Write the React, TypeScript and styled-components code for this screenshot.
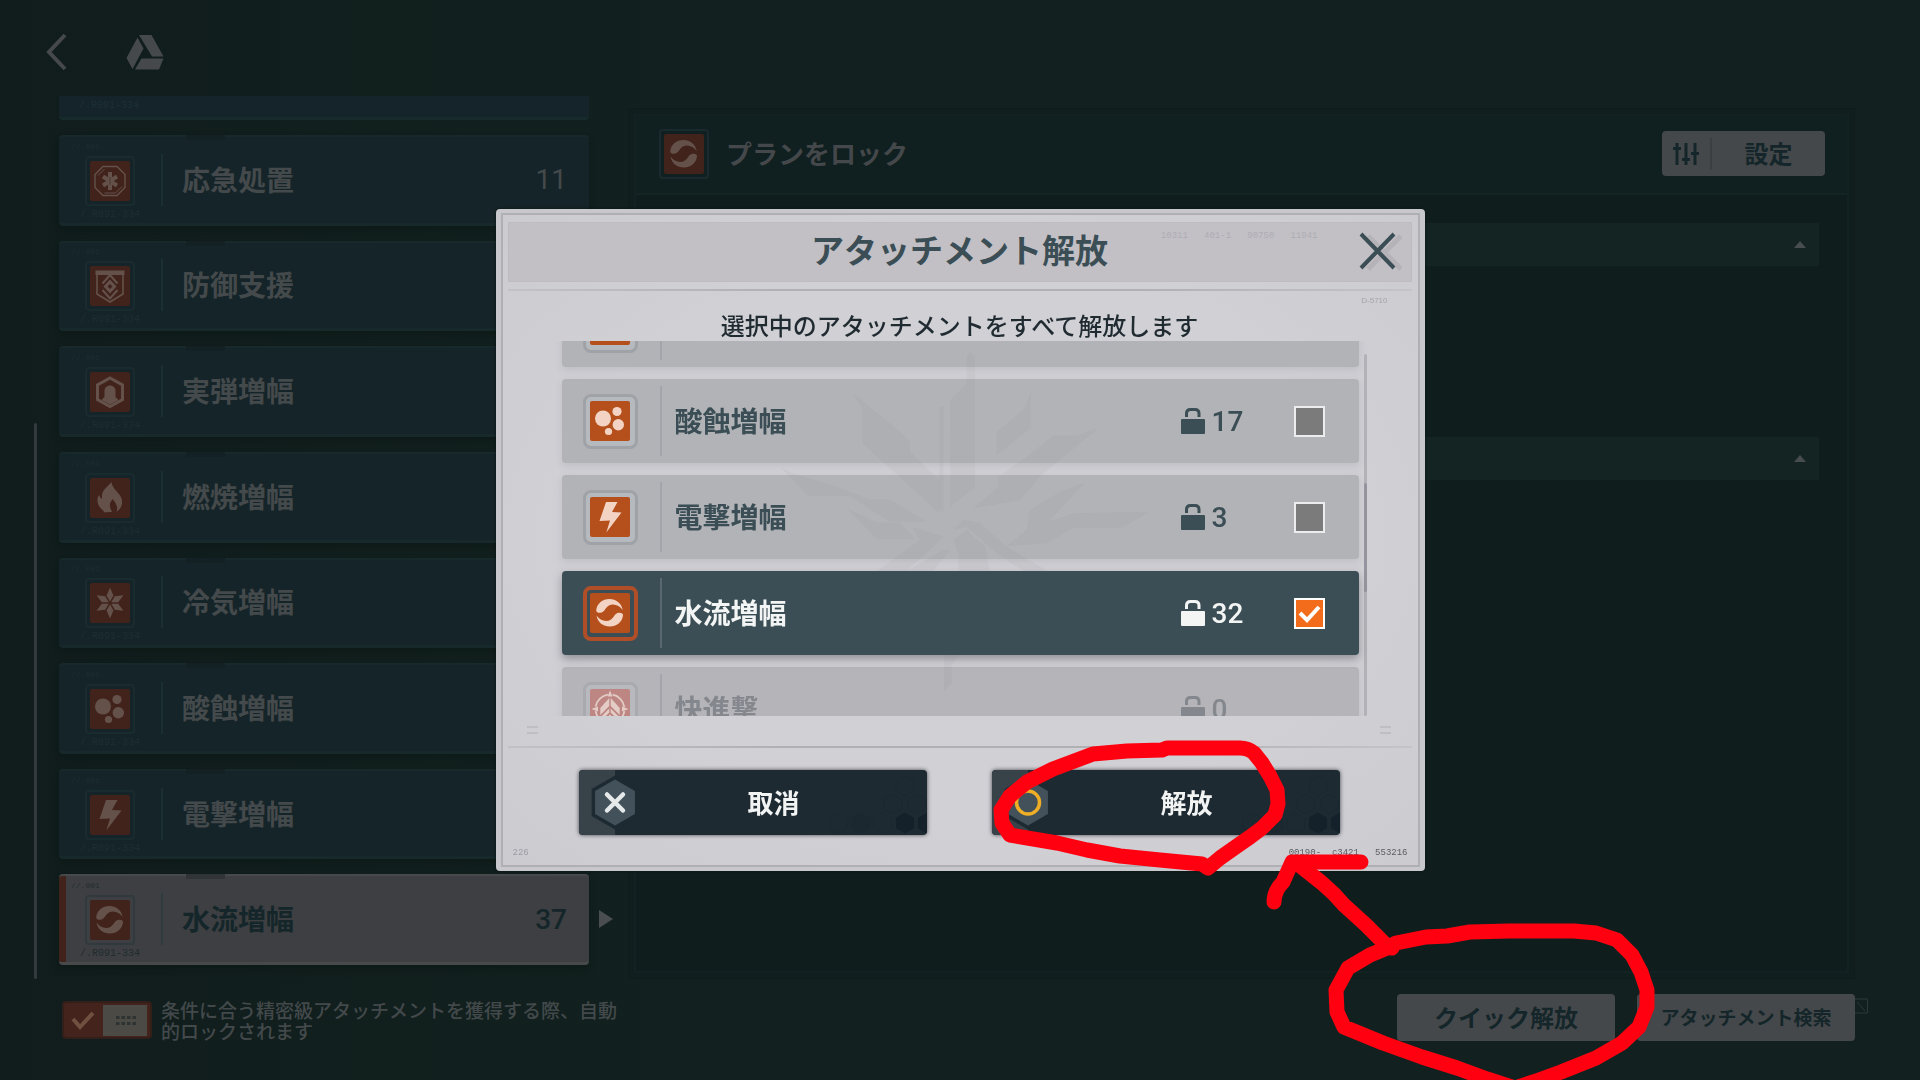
import React, { useState } from "react";
import styled, { createGlobalStyle, css } from "styled-components";

const GlobalStyle = createGlobalStyle`
  *, *::before, *::after { box-sizing: border-box; }
  body {
    margin: 0;
    background: #12201f;
    font-family: Roboto, "Noto Sans CJK JP", sans-serif;
  }
  button, input { font-family: inherit; }
  ul { list-style: none; margin: 0; padding: 0; }
  h1, h2, p { margin: 0; }
  svg { display: block; }
`;

/* ---------- icons ---------- */

type IconName =
  | "aid" | "guard" | "round" | "flame" | "frost"
  | "acid" | "bolt" | "water" | "rush";

const swirl =
  "M6.2 17C7 10.5 12.500 6 19.500 6C26 6 31.500 10 32.700 17C29.500 12.500 23.500 9.800 18.500 12.800C15 15 14.800 19.500 10.200 19.800C7.600 19.900 6 19 6.200 17Z";

const glyphs: Record<IconName, React.ReactNode> = {
  aid: (
    <>
      <path d="M13 5.5h14l8 8v13l-8 8H13l-8-8v-13z" fill="none" stroke="currentColor" strokeWidth="1.4" />
      <path d="M14.500 32h11l6.500-6.500M8 14.500L14.500 8" fill="none" stroke="currentColor" strokeWidth="1" />
      <path d="M20 11v18M13 15.500l14 9M27 15.500l-14 9" stroke="currentColor" strokeWidth="4" />
      <path d="M20 16v8" stroke="#0003" strokeWidth="1.5" />
    </>
  ),
  guard: (
    <>
      <path d="M5.500 4.500h29V9h-29z" />
      <path d="M7 8v20l13 8 13-8V8" fill="none" stroke="currentColor" strokeWidth="1.6" />
      <path d="M12.500 17.500l7.500-8.500 7.500 8.500M12.500 24l7.500 8.500 7.500-8.500" fill="none" stroke="currentColor" strokeWidth="2" />
      <path fillRule="evenodd" d="M20 13.500l6.500 7-6.500 7-6.500-7zM20 18l-2.500 2.500L20 23l2.500-2.500z" />
    </>
  ),
  round: (
    <>
      <path d="M20 6l12.500 7v14.500L20 34.500 7.500 27.500V13z" fill="none" stroke="currentColor" strokeWidth="3" />
      <path d="M11.500 28l3-3v-6c0-3.200 2.500-5.500 5.500-5.500s5.500 2.300 5.500 5.500v6l3 3-8.500 4.500z" />
    </>
  ),
  flame: (
    <path d="M21.500 4c.5 5 4.500 8.500 7.500 12 4.500 5.500 4.500 13-2.500 18 1.500-4.500.5-8-4-13-.8 2-2.500 3-2.600 5.500-.1 3 1 5 2.100 7.500H15C8 29.500 5.500 22.500 9 17c.8 2 1.500 3.300 3.200 4C10.500 13 16 10.500 21.500 4zM14 34.200c-1.500-3-.8-6 1-8.200.2 3.500 1.500 5.500 3.500 8.200z" />
  ),
  frost: (
    <>
      {[0, 60, 120, 180, 240, 300].map((a) => (
        <path key={a} d="M20 18.500l-3.400-6L20 4.500l3.400 8z" transform={`rotate(${a} 20 20)`} />
      ))}
    </>
  ),
  acid: (
    <>
      <circle cx="13" cy="17.500" r="8" />
      <circle cx="27" cy="10.500" r="4.600" />
      <circle cx="28.300" cy="23.700" r="5.700" />
      <circle cx="18.500" cy="30.500" r="3.600" />
    </>
  ),
  bolt: <path d="M16 5h11.500L22 15l9.500.5L16.300 35.500 20 23.500 9.500 24z" />,
  water: (
    <>
      <path d={swirl} />
      <path d={swirl} transform="rotate(180 19.600 19.800)" />
    </>
  ),
  rush: (
    <>
      <circle cx="20" cy="20" r="14.500" fill="none" stroke="currentColor" strokeWidth="1.800" strokeDasharray="18 4.770" strokeDashoffset="20.500" />
      <path d="M20 1.500l2.500 6h-5zM38.500 20l-6.500 2.500v-5zM1.500 20l6.500-2.500v5zM20 38.500l-2.500-6h5z" />
      <path d="M19.300 9v8l-9 9v-7zM20.700 9v8l9 9v-7zM19.300 19.500v4l-7 7-1.500-2.500zM20.700 19.500v4l7 7 1.500-2.500zM20 25.500l5 5-2 2-3-3-3 3-2-2z" />
    </>
  ),
};

const Tile = styled.span<{ $dim?: boolean; $on?: boolean; $off?: boolean }>`
  display: grid;
  place-items: center;
  width: ${(p) => (p.$dim ? 50 : 55)}px;
  height: ${(p) => (p.$dim ? 50 : 55)}px;
  border-radius: ${(p) => (p.$dim ? 4 : 8)}px;
  border: ${(p) => (p.$dim ? "2px solid #192b2e" : "3px solid #9fa2a6")};
  background: ${(p) => (p.$dim ? "transparent" : "#b6b9bd")};
  ${(p) => p.$on && !p.$dim && css`border: 4px solid #b04f27; background: transparent;`}
  ${(p) => p.$on && p.$dim && css`border-color: #30393d;`}
  ${(p) => p.$off && css`border-color: #a8aaaf; background: #b8b9bf;`}

  svg {
    width: 40px;
    height: 40px;
    border-radius: 2px;
    background: ${(p) => (p.$dim ? "#41231c" : p.$off ? "#bd8682" : "#b5501c")};
    color: ${(p) => (p.$dim ? "#64524a" : p.$off ? "#e3cbc6" : "#f3d3c4")};
  }
`;

function ItemIcon({ name, dim, on, off }: { name: IconName; dim?: boolean; on?: boolean; off?: boolean }) {
  return (
    <Tile $dim={dim} $on={on} $off={off}>
      <svg viewBox="0 0 40 40" fill="currentColor" aria-hidden="true">{glyphs[name]}</svg>
    </Tile>
  );
}

/* ---------- page behind the dialog ---------- */

const Page = styled.div`
  position: relative;
  min-height: 100vh;
  display: grid;
  grid-template-rows: 96px 1fr 101px;
  background: linear-gradient(90deg, #101d1c, #12211f 40%, #12201f);
  overflow: hidden;
`;

const TopBar = styled.header`
  display: flex;
  align-items: center;
  gap: 50px;
  padding: 8px 40px 0;
`;

const IconButton = styled.button`
  border: 0;
  padding: 0;
  background: none;
  color: #46494c;
  cursor: pointer;
`;

const Main = styled.main`
  display: grid;
  grid-template-columns: 3px minmax(0, 530px) minmax(0, 1fr);
  column-gap: 22px;
  padding: 0 65px 0 34px;
  min-height: 0;
`;

const Rail = styled.div`
  align-self: end;
  height: 63%;
  border-radius: 2px;
  background: #33393c;
`;

const PlanList = styled.ul`
  display: grid;
  grid-template-rows: 24px repeat(8, 1fr);
  row-gap: 15px;
  margin-bottom: 14px;
`;

const PlanItem = styled.li<{ $on?: boolean }>`
  position: relative;
  display: grid;
  grid-template-columns: 102px 1fr auto;
  align-items: center;
  padding-right: 22px;
  border-radius: 4px;
  border: 0 solid #17292b;
  border-width: 2px 0 3px;
  background: #152428;
  color: #44494b;
  font-size: 28px;
  font-weight: 700;
  box-shadow: 0 4px 6px #0a151480;
  ${(p) =>
    p.$on &&
    css`
      background: linear-gradient(90deg, #41231c 7px, #3d3f42 7px);
      border-color: #47494b;
      color: #142629;
    `}
`;

const PlanSliver = styled.li`
  display: flex;
  align-items: flex-end;
  padding: 0 20px 6px;
  border-radius: 0 0 4px 4px;
  border-bottom: 3px solid #172b2c;
  background: #15242a;
  color: #1c2f34;
  font: 10px/10px "Liberation Mono", monospace;
`;

const PlanBadge = styled.div<{ $on?: boolean }>`
  display: grid;
  justify-items: center;
  align-content: space-between;
  height: 84px;
  padding: 4px 0 2px;
  color: ${(p) => (p.$on ? "#222c2e" : "#1c2e33")};
  font: 10px/10px "Liberation Mono", monospace;
  span:first-child { justify-self: start; padding-left: 12px; font-size: 8px; }
`;

const PlanName = styled.span<{ $on?: boolean }>`
  display: flex;
  align-items: center;
  height: 52px;
  padding: 0 0 2px 19px;
  border-left: 2px solid ${(p) => (p.$on ? "#2e3c40" : "#1b2e32")};
`;

const Count = styled.span<{ $on?: boolean }>`
  font-size: 28px;
  font-weight: ${(p) => (p.$on ? 500 : 400)};
`;

const Notch = styled.span<{ $on?: boolean }>`
  position: absolute;
  top: -2px;
  left: 24%;
  width: 39px;
  height: 5px;
  background: ${(p) => (p.$on ? "#303437" : "#132124")};
`;

const Pointer = styled.span`
  position: absolute;
  top: 50%;
  right: -24px;
  margin-top: -9px;
  border-left: 14px solid #4a4e50;
  border-top: 9px solid transparent;
  border-bottom: 9px solid transparent;
`;

const Panel = styled.section`
  margin: 12px 0 0 17px;
  padding: 5px;
  border: 1px solid #0f1c1b;
  background: #101e1d;
  min-height: 0;
`;

const PanelInner = styled.div`
  height: 100%;
  border: 2px solid #122222;
  background: #0f1e1d;
`;

const PanelHead = styled.div`
  display: flex;
  align-items: center;
  gap: 17px;
  height: 79px;
  padding: 0 22px 2px 23px;
  background: #101f1f;
  border-bottom: 2px solid #142423;
  color: #44484b;
  font-size: 26px;
  font-weight: 700;
  h1 { flex: 1; padding-bottom: 2px; font-size: inherit; }
`;

const DimButton = styled.button<{ $size: number }>`
  display: flex;
  align-items: center;
  justify-content: center;
  border: 0;
  border-radius: 4px;
  background: #45484b;
  color: #142629;
  font-size: ${(p) => p.$size}px;
  font-weight: 700;
  cursor: pointer;
`;

const SettingsButton = styled(DimButton)`
  width: 163px;
  height: 45px;
  padding: 0;
  span:first-child { padding: 4px 11px; border-right: 2px solid #3b3f42; }
  span:last-child { flex: 1; padding-bottom: 3px; }
`;

const Section = styled.button`
  display: flex;
  align-items: center;
  justify-content: flex-end;
  width: calc(100% - 56px);
  height: 43px;
  margin: 28px 28px 171px;
  padding: 0 13px;
  border: 0;
  background: #142423;
  &::after {
    content: "";
    border-bottom: 7px solid #474c4e;
    border-left: 6px solid transparent;
    border-right: 6px solid transparent;
  }
  & + & { margin-top: 0; }
`;

const Footer = styled.footer`
  display: flex;
  align-items: flex-start;
  padding: 15px 52px 0 62px;
`;

const AutoLock = styled.label`
  display: flex;
  align-items: flex-start;
  gap: 9px;
  margin-top: 7px;
  color: #43494b;
  font-size: 19px;
  line-height: 21px;
  font-weight: 500;
  span { width: 462px; }
`;

const Toggle = styled.input`
  appearance: none;
  flex: none;
  width: 90px;
  height: 38px;
  margin: 0;
  border: 2px solid #331f1a;
  border-radius: 4px;
  background:
    linear-gradient(#4b4a45, #4b4a45) right 3px center / 44px 31px no-repeat,
    #43231b;
`;

const ToggleWrap = styled.div`
  display: grid;
  svg, input { grid-area: 1 / 1; }
  svg { z-index: 1; pointer-events: none; }
`;

const Actions = styled.div`
  display: flex;
  align-items: flex-start;
  gap: 22px;
  margin-left: auto;
`;

const ActionButton = styled(DimButton)`
  width: 218px;
  height: 47px;
  padding: 0 0 2px;
`;

const CornerMark = styled.svg`
  width: 13px;
  height: 16px;
  margin: 4px 0 0 -22px;
`;

/* ---------- dialog ---------- */

const Overlay = styled.div`
  position: fixed;
  inset: 0;
  display: grid;
  place-items: center;
`;

const Dialog = styled.section`
  width: min(929px, 94vw);
  padding: 4px 5px;
  border-radius: 4px;
  background: #c8c7cc;
  box-shadow: 0 0 3px #0a1413;
`;

const DialogInner = styled.div`
  padding: 7px 6px 30px 5px;
  border: 2px solid #b0afb4;
  background: radial-gradient(ellipse at 50% 50%, #d1d0d5 60%, #cccbd0 100%);
`;

const DialogHead = styled.header`
  position: relative;
  display: grid;
  grid-template-columns: 1fr auto 1fr;
  align-items: center;
  height: 60px;
  padding: 0 9px;
  background: #c2c0c5;
  border: 1px solid #bebcc1;
  color: #3b4e55;
  h2 { grid-column: 2; font-size: 33px; line-height: 40px; font-weight: 700; }
  button { justify-self: end; color: #3b4e55; }
`;

const Serial = styled.span`
  position: absolute;
  top: 8px;
  right: 93px;
  color: #aeadb3;
  font: 9px/10px "Liberation Mono", monospace;
  white-space: pre;
`;

const Rule = styled.div`
  height: 2px;
  margin-top: 7px;
  background: linear-gradient(90deg, #c2c1c6, #b1b0b4 30%, #b1b0b4 70%, #c4c3c8);
`;

const Code = styled.p`
  height: 21px;
  padding: 5px 24px 0 0;
  text-align: right;
  color: #a5a4aa;
  font: 8px/10px "Liberation Sans", sans-serif;
`;

const Lead = styled.p`
  margin-bottom: -1px;
  text-align: center;
  color: #1f2b31;
  font-size: 24px;
  font-weight: 500;
  line-height: 30px;
`;

const Scroller = styled.div`
  position: relative;
  display: grid;
  grid-template-columns: minmax(0, 1fr) 3px;
  column-gap: 5px;
  height: 375px;
  padding: 0 45px 0 54px;
  clip-path: inset(0);
`;

const Options = styled.ul`
  display: grid;
  grid-auto-rows: 84px;
  row-gap: 12px;
  height: 375px;
  margin-top: -58px;
`;

const Option = styled.li<{ $on?: boolean; $off?: boolean }>`
  position: relative;
  border-radius: 4px;
  background: #b2b3b7;
  color: #3b4e55;
  box-shadow: 0 3px 7px #8d8c9440;
  ${(p) =>
    p.$on &&
    css`
      z-index: 2;
      background: #3b4e55;
      color: #f3f4f4;
      box-shadow: 0 4px 9px #6a6a72a0;
    `}
  ${(p) => p.$off && css`background: #b5b5b9; color: #84878d;`}
`;

const OptionLabel = styled.label`
  display: grid;
  grid-template-columns: 98px 1fr 106px 31px;
  align-items: center;
  height: 84px;
  padding-right: 34px;
  font-size: 28px;
  font-weight: 700;
  cursor: pointer;
`;

const OptionIcon = styled.span`
  padding-left: 21px;
`;

const OptionName = styled.span<{ $on?: boolean }>`
  display: flex;
  align-items: center;
  height: 70px;
  padding: 0 0 2px 13px;
  border-left: 2px solid ${(p) => (p.$on ? "#5a696f" : "#a4a5aa")};
`;

const LockCount = styled.span`
  display: flex;
  align-items: center;
  gap: 6px;
  width: 114px;
  margin-left: -8px;
  font-size: 28px;
  font-weight: 500;
`;

const Tick = styled.input`
  appearance: none;
  width: 31px;
  height: 31px;
  margin: 0;
  border: 2px solid #ececee;
  background: #7b7b7b;
  &:checked {
    border-color: #fff;
    background: #f26c1c;
  }
`;

const TickBox = styled.span<{ $off?: boolean }>`
  display: grid;
  visibility: ${(p) => (p.$off ? "hidden" : "visible")};
  input, svg { grid-area: 1 / 1; }
  svg { pointer-events: none; }
`;

const Track = styled.div`
  margin-top: 13px;
  padding-top: 129px;
  border-radius: 2px;
  background: #b3b2b7;
  &::before {
    content: "";
    display: block;
    height: 109px;
    border-radius: 2px;
    background: #96949e;
  }
`;

const Emblem = styled.svg`
  position: absolute;
  z-index: 1;
  left: 50%;
  top: -1px;
  width: 440px;
  height: 370px;
  margin-left: -220px;
  pointer-events: none;
`;

const Marks = styled.div`
  display: flex;
  align-items: center;
  justify-content: space-between;
  height: 23px;
  padding: 4px 21px 0 19px;
  span {
    width: 11px;
    height: 8px;
    border: solid #bfbec3;
    border-width: 2px 0;
  }
`;

const Buttons = styled.div`
  position: relative;
  display: grid;
  grid-template-columns: repeat(2, minmax(0, 348px));
  justify-content: center;
  gap: 65px;
  margin-top: 22px;
`;

const BigButton = styled.button`
  position: relative;
  display: grid;
  grid-template-columns: 72px 1fr;
  align-items: center;
  height: 65px;
  padding: 0 31px 0 0;
  border: 0;
  border-radius: 4px;
  overflow: hidden;
  background: #1d2a32;
  box-shadow: 0 0 4px #44464d;
  color: #f2f3f3;
  font-size: 26px;
  font-weight: 700;
  cursor: pointer;
`;

const ButtonText = styled.span`
  padding-bottom: 2px;
`;

const Honeycomb = styled.svg`
  position: absolute;
  right: 0;
  bottom: 0;
  width: 100px;
  height: 65px;
`;

const Fine = styled.small<{ $right?: boolean }>`
  position: absolute;
  bottom: -23px;
  ${(p) => (p.$right ? "right: 4px; color: #5c5b60;" : "left: 5px; color: #9d9ca2;")}
  font: 9px/10px "Liberation Mono", monospace;
  white-space: pre;
`;

const Scribble = styled.svg`
  position: absolute;
  inset: 0;
  width: 100%;
  height: 100%;
  pointer-events: none;
`;

/* ---------- data ---------- */

const plans: { name: string; icon: IconName; count?: number; on?: boolean }[] = [
  { name: "応急処置", icon: "aid", count: 11 },
  { name: "防御支援", icon: "guard" },
  { name: "実弾増幅", icon: "round" },
  { name: "燃焼増幅", icon: "flame" },
  { name: "冷気増幅", icon: "frost" },
  { name: "酸蝕増幅", icon: "acid" },
  { name: "電撃増幅", icon: "bolt" },
  { name: "水流増幅", icon: "water", count: 37, on: true },
];

const options: { name: string; icon: IconName; count: number; off?: boolean }[] = [
  { name: "酸蝕増幅", icon: "acid", count: 17 },
  { name: "電撃増幅", icon: "bolt", count: 3 },
  { name: "水流増幅", icon: "water", count: 32 },
  { name: "快進撃", icon: "rush", count: 0, off: true },
];

const Lock = () => (
  <svg width="26" height="28" viewBox="0 0 26 28" aria-hidden="true">
    <path d="M6.500 10V6.500Q6.500 2.500 10.500 2.500H15Q19 2.500 19 6.500V10" fill="none" stroke="currentColor" strokeWidth="3" />
    <rect x="1" y="12" width="24" height="15" rx="1" fill="currentColor" />
  </svg>
);

const hex = (x: number, y: number, r: number) =>
  [0, 1, 2, 3, 4, 5]
    .map((i) => {
      const a = (Math.PI / 3) * i + Math.PI / 2;
      return `${x + r * Math.cos(a)},${y + r * Math.sin(a)}`;
    })
    .join(" ");

function KeyHex({ kind }: { kind: "cross" | "ring" }) {
  return (
    <svg width="72" height="65" viewBox="0 0 72 65" aria-hidden="true">
      <rect width="36" height="65" fill="#384249" />
      <polygon points={hex(36, 32.5, 27)} fill="#1d2a32" />
      <polygon points={hex(36, 32.5, 23)} fill="#43525a" />
      {kind === "cross" ? (
        <path d="M28 24.500l16 16M44 24.500l-16 16" stroke="#e6e9ea" strokeWidth="4.500" strokeLinecap="round" />
      ) : (
        <circle cx="36" cy="32.500" r="11.500" fill="none" stroke="#efae26" strokeWidth="3.500" />
      )}
    </svg>
  );
}

const Cells = () => (
  <Honeycomb viewBox="0 0 100 65" aria-hidden="true">
    <polygon points={hex(78, 53, 10.5)} fill="#15212a" />
    <polygon points={hex(100, 53, 10.5)} fill="#15212a" />
    <g fill="none" stroke="#1b2830">
      <polygon points={hex(78, 16, 10)} />
      <polygon points={hex(66, 34, 10)} />
      <polygon points={hex(90, 34, 10)} />
      <polygon points={hex(56, 53, 10)} />
      <polygon points={hex(34, 53, 10)} fill="#1b2830" />
      <polygon points={hex(12, 53, 10)} />
    </g>
  </Honeycomb>
);

export default function App() {
  const [picked, setPicked] = useState<string[]>(["水流増幅"]);
  const toggle = (name: string) =>
    setPicked((p) => (p.includes(name) ? p.filter((n) => n !== name) : [...p, name]));

  return (
    <Page>
      <GlobalStyle />
      <TopBar>
        <IconButton aria-label="戻る">
          <svg width="36" height="40" viewBox="0 0 36 40" fill="none" stroke="currentColor" strokeWidth="4">
            <path d="M25 3L9 20l16 17" />
          </svg>
        </IconButton>
        <IconButton aria-label="メニュー">
          <svg width="38" height="36" viewBox="0 0 38 36" fill="currentColor">
            <path d="M13 1h12.500l12 21.500H26zM11.500 3.500l6 11L6.500 35 .5 24zM15.500 24.500H37.500L33 35.500H9z" />
          </svg>
        </IconButton>
      </TopBar>

      <Main>
        <Rail />
        <PlanList>
          <PlanSliver aria-hidden="true">/.R091-334</PlanSliver>
          {plans.map((p) => (
            <PlanItem key={p.name} $on={p.on}>
              <Notch $on={p.on} />
              <PlanBadge $on={p.on}>
                <span>//.001</span>
                <ItemIcon name={p.icon} dim on={p.on} />
                <span>/.R091-334</span>
              </PlanBadge>
              <PlanName $on={p.on}>{p.name}</PlanName>
              {p.count !== undefined && <Count $on={p.on}>{p.count}</Count>}
              {p.on && <Pointer />}
            </PlanItem>
          ))}
        </PlanList>
        <Panel>
          <PanelInner>
            <PanelHead>
              <ItemIcon name="water" dim />
              <h1>プランをロック</h1>
              <SettingsButton $size={24}>
                <span>
                  <svg width="26" height="24" viewBox="0 0 26 24" stroke="currentColor" strokeWidth="3" fill="none">
                    <path d="M4 1v22M13 1v22M22 1v22M0 6.500h8M9 17.500h8M18 11.500h8" />
                  </svg>
                </span>
                <span>設定</span>
              </SettingsButton>
            </PanelHead>
            <Section aria-label="折りたたむ" />
            <Section aria-label="折りたたむ" />
          </PanelInner>
        </Panel>
      </Main>

      <Footer>
        <AutoLock>
          <ToggleWrap>
            <Toggle type="checkbox" defaultChecked />
            <svg width="90" height="38" viewBox="0 0 90 38" fill="none" aria-hidden="true">
              <path d="M11 18l7 8L31 12" stroke="#705040" strokeWidth="4" />
              <path d="M54 16.500h20M54 22.500h20" stroke="#2d3232" strokeWidth="3" strokeDasharray="3.500 2" />
            </svg>
          </ToggleWrap>
          <span>条件に合う精密級アタッチメントを獲得する際、自動的ロックされます</span>
        </AutoLock>
        <Actions>
          <ActionButton $size={24}>クイック解放</ActionButton>
          <ActionButton $size={19}>アタッチメント検索</ActionButton>
          <CornerMark viewBox="0 0 13 16" fill="none" stroke="#2c393a" aria-hidden="true">
            <path d="M0 1h12.500v14H0M2 4l8 9" />
          </CornerMark>
        </Actions>
      </Footer>

      <Overlay>
        <Dialog role="dialog" aria-modal="true" aria-labelledby="dialog-title">
          <DialogInner>
            <DialogHead>
              <h2 id="dialog-title">アタッチメント解放</h2>
              <Serial aria-hidden="true">10311   401-1   90750   11941</Serial>
              <IconButton aria-label="閉じる">
                <svg width="44" height="44" viewBox="0 0 44 44" fill="none" strokeWidth="4">
                  <path d="M10 6l33 33M43 6L10 39" stroke="#0001" strokeWidth="5" />
                  <path d="M3 4l33 34M36 4L3 38" stroke="currentColor" />
                </svg>
              </IconButton>
            </DialogHead>
            <Rule />
            <Code>D-5710</Code>
            <Lead>選択中のアタッチメントをすべて解放します</Lead>
            <Scroller>
              <Options>
                <Option>
                  <OptionLabel as="div">
                    <OptionIcon><ItemIcon name="frost" /></OptionIcon>
                    <OptionName />
                  </OptionLabel>
                </Option>
                {options.map((o) => {
                  const on = picked.includes(o.name);
                  return (
                    <Option key={o.name} $on={on} $off={o.off}>
                      <OptionLabel>
                        <OptionIcon><ItemIcon name={o.icon} on={on} off={o.off} /></OptionIcon>
                        <OptionName $on={on}>{o.name}</OptionName>
                        <LockCount><Lock />{o.count}</LockCount>
                        <TickBox $off={o.off}>
                          <Tick type="checkbox" checked={on} disabled={o.off} onChange={() => toggle(o.name)} />
                          {on && (
                            <svg width="31" height="31" viewBox="0 0 31 31" fill="none" aria-hidden="true">
                              <path d="M6 15l7 7L25 9" stroke="#fff" strokeWidth="4" />
                            </svg>
                          )}
                        </TickBox>
                      </OptionLabel>
                    </Option>
                  );
                })}
              </Options>
              <Track />
              <Emblem viewBox="0 0 1320 1110" fill="#464a55" fillOpacity="0.04" aria-hidden="true">
                <path d="M630 180L680 130V50L690 35 705 50V440L632 500z" />
                <path d="M598 200h12v320l-12-12z" />
                <path d="M338 160L480 275 510 305V335L598 420V520L368 310V205z" />
                <path d="M120 380L155 400 290 440 385 478H450L500 510 560 545H450L385 505 330 468H205z" />
                <path d="M320 505L410 548H480L525 597H412z" />
                <path d="M872 160V265L770 345V275L850 210z" />
                <path d="M1075 265L905 405 840 480 700 505 775 440V410L860 350 940 287H1010z" />
                <path d="M1035 428L925 545 1000 520 1230 515 1145 563H1000L920 610 800 618 860 570 870 510 970 450z" />
                <path d="M515 560L612 590 500 693H412L540 600z" />
                <path d="M500 693L610 630H630L580 693z" />
                <path d="M640 600L680 570 735 620 750 693H655V640z" />
                <path d="M640 570L670 540 720 548 800 620 922 693H850L770 640 680 560z" />
                <path d="M612 945H655L635 975V1030L612 1055z" />
              </Emblem>
            </Scroller>
            <Marks><span /><span /></Marks>
            <Rule />
            <Buttons>
              <BigButton><KeyHex kind="cross" /><ButtonText>取消</ButtonText><Cells /></BigButton>
              <BigButton><KeyHex kind="ring" /><ButtonText>解放</ButtonText><Cells /></BigButton>
              <Fine>226</Fine>
              <Fine $right>00190-  c3421   553216</Fine>
            </Buttons>
          </DialogInner>
        </Dialog>
      </Overlay>

      <Scribble viewBox="0 0 1920 1080" fill="none" stroke="#ff0010" strokeWidth="15" strokeLinecap="round" strokeLinejoin="round" aria-hidden="true">
        <path d="M1167 748H1240Q1248 748 1254 753L1262 763 1270 776 1277 790 1278 804 1275 815 1262 828 1250 837 1237 846 1220 858 1208 868 1202 864 1160 860 1120 856 1087 850 1057 843 1010 835 1002 823 1001 810 1010 796 1027 782 1053 769 1077 760 1093 754 1127 751 1162 750z" />
        <path d="M1361 862H1292L1283 882Q1274 891 1274 902" />
        <path d="M1298 864L1322 883 1334 894 1344 905 1366 925 1387 946 1392 948" />
        <path d="M1387 948L1396 943 1426 937 1447 936 1470 932 1509 931H1574L1596 933 1617 940 1632 955 1641 972 1647 990V1007L1639 1027 1622 1043 1596 1058 1561 1072 1539 1080 1515 1088 1487 1079 1457 1068 1422 1057 1383 1043 1344 1027 1337 1012 1336 990 1348 968 1370 955z" />
      </Scribble>
    </Page>
  );
}
